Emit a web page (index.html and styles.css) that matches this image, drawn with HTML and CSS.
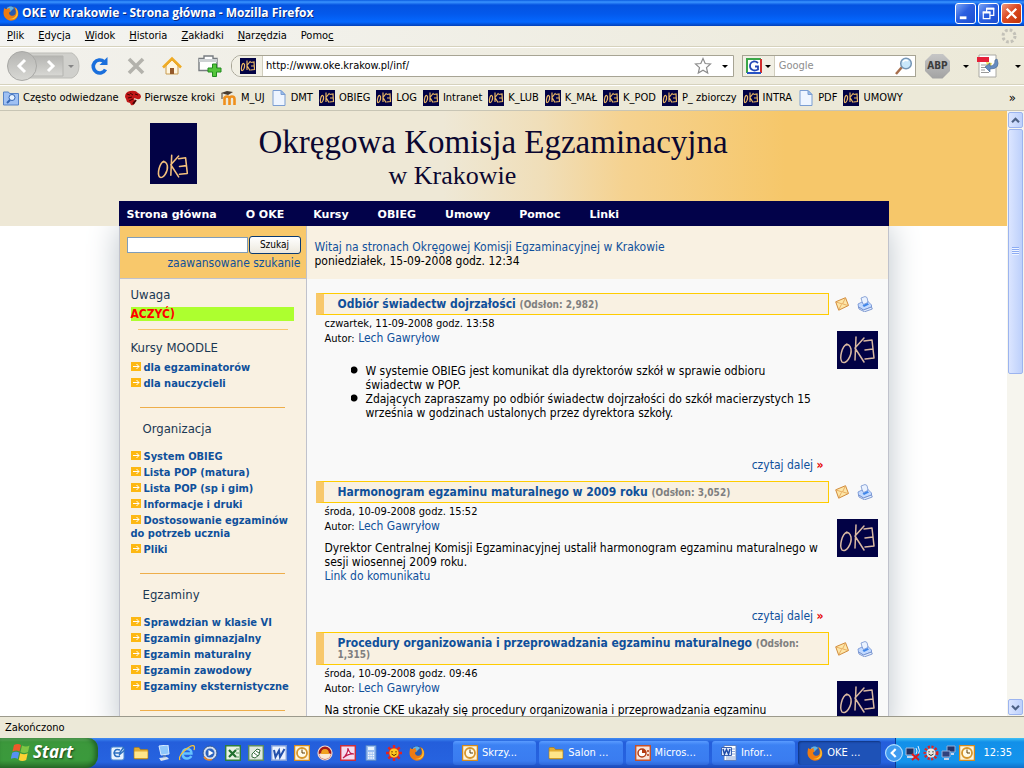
FILE: index.html
```html
<!DOCTYPE html>
<html lang="pl">
<head>
<meta charset="utf-8">
<title>OKE w Krakowie - Strona główna</title>
<link rel="stylesheet" href="styles.css">
</head>
<body>
<svg class="defs" aria-hidden="true">
  <symbol id="oke" viewBox="0 0 41 38">
    <g fill="none" stroke-linecap="round" stroke-linejoin="round">
      <path d="M10 13C5 15 2 27 5 31c4 3 10-6 9-13-1-4-3-5-5-4M19 6l-1 23M27 7l-9 10 9 14M27 10l8-1 2 18-9 1M28 19l8-1"/>
    </g>
  </symbol>
  <symbol id="oke-mini" viewBox="0 0 16 16">
    <path fill="#020245" d="M0 0h16v16H0z"/>
    <path fill="none" stroke="#e9b765" stroke-width="1.2" d="M3 5.500C1.500 7 1 11 1.700 12.500 3.500 13 5 9 4.500 6.500 4 5.500 3.500 5 2.500 6M7 2.500V12M10.500 3L7 7.500 10 12.500M10.500 4.500L14 4l.5 7.500-4 .5M11 8h3.200"/>
  </symbol>
  <symbol id="firefox" viewBox="0 0 16 16">
    <circle cx="8" cy="8" r="7.300" fill="#2a5cae"/>
    <path d="M4 3c2-2 5-2 7 0L9 5 7 7 4 6z" fill="#5fb3e8"/>
    <path d="M1 3c1 1 2 1 3 1 1-1 2-1 3-.5C6 5 7 5 8 6 7 7 6 7 6 8.500c1 3 5 3 6.500.5C13.500 6 12 4 11 2c3 1 4.500 4 4.300 7C15 13 12 15.700 8 15.700S.500 12 .500 8C.500 6 1 5 1 3z" fill="#ee7b12"/>
    <path d="M12.500 2.500c2 2 2.800 5 2 8C13 14 9 15 6 14c5 0 8-3 7.500-7-.1-2-.5-3-1-4.500z" fill="#fbc935"/>
  </symbol>
  <symbol id="page" viewBox="0 0 16 16">
    <path d="M2 .500h8L14 4.500v11H2z" fill="#eef5ff" stroke="#7b9ed2"/><path d="M10 .500v4h4z" fill="#9cc0ef" stroke="#7b9ed2"/>
  </symbol>
  <symbol id="folder" viewBox="0 0 16 16">
    <path d="M1 3.500q0-1 1-1h4l1.500 2H14q1 0 1 1V13q0 1-1 1H2q-1 0-1-1z" fill="#e2ac32" stroke="#a87912" stroke-width=".6"/><path d="M1.500 6.500h13V13h-13z" fill="#ffe58a"/>
  </symbol>
  <symbol id="outlook" viewBox="0 0 16 16">
    <path d="M.500.500h15v15H.500z" fill="#fff4d8" stroke="#d48a1c" stroke-width="1.500"/><circle cx="8" cy="8" r="5" fill="#fffbe9" stroke="#d7962c" stroke-width="1.800"/><path d="M8 4.500V8h3" fill="none" stroke="#5c3b06"/>
  </symbol>
  <symbol id="sun" viewBox="0 0 16 16">
    <path d="M6.800 0h2.400v3H6.800zM6.800 13h2.400v3H6.800zM0 6.800h3v2.400H0zM13 6.800h3v2.400h-3zM1.500 3.200l1.700-1.700 2.300 2.300-1.700 1.700zM12.800 1.500l1.700 1.700-2.300 2.300-1.700-1.700zM1.500 12.800l2.300-2.300 1.700 1.700-2.300 2.300zM14.500 12.800l-1.700 1.700-2.300-2.300 1.700-1.700z" fill="#e32222"/><circle cx="8" cy="8" r="5" fill="#ffc91f" stroke="#e32222" stroke-width=".8"/><path d="M6 6v1.500M10 6v1.500M5.500 9q2.500 3 5 0" fill="none" stroke="#5a2a00"/>
  </symbol>
  <symbol id="word" viewBox="0 0 16 16">
    <path d="M3 .500h12v15H3z" fill="#fff" stroke="#5c7fc0"/><path d="M11 4h3M11 6.500h3M11 9h3M5 12h9M5 14h9" stroke="#8ba4d6"/><path d="M.500 2.500h10v8H.500z" fill="#dfe9fb" stroke="#3a61b1"/><path d="M2 4l1.500 5L5.500 4.500 7.500 9 9 4" fill="none" stroke="#1f4aa8" stroke-width="1.500"/>
  </symbol>
  <symbol id="arrow" viewBox="0 0 10 9">
    <path d="M0 0h10v9H0z" fill="#fdb813"/><path d="M2 4.500h6M5.500 2L8 4.500 5.500 7" fill="none" stroke="#fff"/>
  </symbol>
  <symbol id="mail" viewBox="0 0 14 14">
    <path d="M.700 4.800L10.500.700l3 7.800-9.800 4.700z" fill="#fde6a8" stroke="#d08b3c"/><path d="M1 5l6.500 2L10.400 1M3.800 12.600l2.700-5.300M13 8.500L8 7" fill="none" stroke="#e3a254" stroke-width=".8"/>
  </symbol>
  <symbol id="print" viewBox="0 0 16 16">
    <path d="M4 2l4-1.500 2 1L11.500 8 6 9z" fill="#eaf2ff" stroke="#7593cf" stroke-width=".8"/><path d="M1 8l4-2 1.500 2.500L10 7l1-1.500 3.500 3.500v2L6.500 14 1.500 11z" fill="#c3daff" stroke="#6f8ed0" stroke-width=".8"/><path d="M1.500 11L6.500 14l8-3 .8 2-7.800 2.800L2 13z" fill="#e4efff" stroke="#6484c6" stroke-width=".8"/><path d="M5.500 9.500l5-2.500 1.500 1.500-5 2.500z" fill="#3f86ea"/>
  </symbol>
</svg>

<div class="window">
  <header class="titlebar">
    <svg class="i16"><use href="#firefox"/></svg>
    <span class="titlebar-text">OKE w Krakowie - Strona główna - Mozilla Firefox</span>
    <button class="winbtn" aria-label="Minimalizuj"><svg viewBox="0 0 20 20"><path d="M4 13h7v3H4z" fill="#fff"/></svg></button>
    <button class="winbtn" aria-label="Przywróć"><svg viewBox="0 0 20 20"><path d="M8 8V4.500h7.500V12H12M4.500 8.500h7v7h-7z" fill="none" stroke="#fff" stroke-width="1.300"/><path d="M8 5h8M4 9h8" stroke="#fff" stroke-width="2"/></svg></button>
    <button class="winbtn winbtn-close" aria-label="Zamknij"><svg viewBox="0 0 20 20"><path d="M5 5l10 10M15 5L5 15" stroke="#fff" stroke-width="2.500"/></svg></button>
  </header>

  <nav class="menubar">
    <button><u>P</u>lik</button><button><u>E</u>dycja</button><button><u>W</u>idok</button><button><u>H</u>istoria</button><button><u>Z</u>akładki</button><button><u>N</u>arzędzia</button><button>Pomo<u>c</u></button>
    <svg class="throbber" viewBox="0 0 16 16"><circle cx="8" cy="8" r="6" fill="none" stroke="#c3c1b8" stroke-width="3" stroke-dasharray="2.700 2"/></svg>
  </nav>

  <div class="toolbar">
    <div class="backforward">
      <svg viewBox="0 0 78 30">
        <defs><linearGradient id="gb" x2="0" y2="1"><stop stop-color="#b5b5b2"/><stop offset="1" stop-color="#d8d8d4"/></linearGradient></defs>
        <path d="M14 2h56q7 4 7 13t-7 12H14z" fill="#d0d0cc" stroke="#bdbdb8"/>
        <path d="M30 5h31v20H30z" fill="url(#gb)" stroke="#b4b4b0"/>
        <circle cx="20" cy="15" r="14.500" fill="url(#gb)" stroke="#a9a9a6"/>
        <path d="M23 9l-6 6 6 6" fill="none" stroke="#fff" stroke-width="3"/><path d="M46 10l5 5-5 5" fill="none" stroke="#fff" stroke-width="3"/><path d="M66 14h6l-3 3z" fill="#858585"/>
      </svg>
    </div>
    <button class="tool" aria-label="Odśwież"><svg viewBox="0 0 20 20"><path d="M15.500 13.500A6.500 6.500 0 1 1 14 5.500" fill="none" stroke="#1a6fdc" stroke-width="3.600"/><path d="M17.500 1v8h-8z" fill="#1a6fdc"/></svg></button>
    <button class="tool" aria-label="Zatrzymaj"><svg viewBox="0 0 20 20"><path d="M3 3l14 14M17 3L3 17" stroke="#b3b2ac" stroke-width="3.600"/></svg></button>
    <button class="tool" aria-label="Strona startowa"><svg viewBox="0 0 20 20"><path d="M4 10v8h12v-8l-6-6z" fill="#fff6e0" stroke="#c99b4f"/><path d="M1 11.500L10 2.500l9 9" fill="none" stroke="#efab24" stroke-width="2.600"/><path d="M8 12h4v6H8z" fill="#94592a"/></svg></button>
    <button class="tool tool-wide" aria-label="Nowa karta"><svg viewBox="0 0 24 22"><path d="M1 3.500h5V1h9v2.500h4v12H1z" fill="#fff" stroke="#777c80" stroke-width="1.400"/><path d="M1 4h18v3H1z" fill="#cdd1d3"/><path d="M14.500 9h4v4H23v4h-4.500v4.500h-4V17H10v-4h4.500z" fill="#54c53b" stroke="#218a1f"/></svg></button>
    <div class="urlbar">
      <span class="favicon"><svg class="i16"><use href="#oke-mini"/></svg></span>
      <input type="text" aria-label="Adres" value="http://www.oke.krakow.pl/inf/">
      <svg class="i18" viewBox="0 0 18 18"><path d="M9 1.500l2.200 5 5.300.5-4 3.600 1.200 5.400L9 13.200 4.300 16l1.200-5.400-4-3.600 5.300-.5z" fill="#fff" stroke="#8c8c8c" stroke-width="1.200"/></svg>
      <span class="caret"></span>
    </div>
    <div class="searchbar">
      <span class="engine"><svg class="i16" viewBox="0 0 16 16"><path d="M0 0h16v16H0z" fill="#fff"/><path d="M1 15V1h14" fill="none" stroke="#3aa648" stroke-width="2"/><path d="M15 1v14" stroke="#d02d2d" stroke-width="2"/><path d="M1 15h14" stroke="#2753c4" stroke-width="2"/><path d="M12 5Q10 3 7.500 3.500 4 4.500 4 8t4 4.500q2.500 0 4-1V8.500H9" fill="none" stroke="#2447b5" stroke-width="1.800"/></svg><span class="caret"></span></span>
      <input type="text" aria-label="Szukaj w Google" placeholder="Google">
      <svg class="i18" viewBox="0 0 18 18"><path d="M1 17l6-7" stroke="#a76d4b" stroke-width="2.500"/><circle cx="11" cy="6.500" r="5.300" fill="#c9e7fb" stroke="#7595b5" stroke-width="1.500"/><path d="M8 5q2-3 5-1" stroke="#fff" fill="none" stroke-width="1.500"/></svg>
    </div>
    <button class="abp">ABP</button>
    <span class="caret caret-wide"></span>
    <svg class="pdf" viewBox="0 0 24 24"><path d="M2 1h17v22H2z" fill="#fff" stroke="#aaa9a3"/><path d="M0 3h12v5H0z" fill="#e5213a"/><path d="M4 11h6M4 13.500h6M4 16h4M4 18.500h8" stroke="#999"/><path d="M9 8l6 1-3 8z" fill="#eddf54"/><path d="M20 5q4 10-7 10v3l-5-5 5-4v3q5 0 5-6z" fill="#648bc0" stroke="#43638d" stroke-width=".6"/></svg>
    <span class="caret"></span>
  </div>

  <nav class="bookmarks">
    <a href="#"><svg class="i16" viewBox="0 0 16 16"><path d="M.500 2h5l1 1.500h9V15H.500z" fill="#9fc1f3" stroke="#5583c7"/><circle cx="9" cy="7.500" r="3" fill="#e7f3ff" stroke="#3466b4"/><path d="M4 13l3-3" stroke="#3466b4" stroke-width="2"/></svg>Często odwiedzane</a>
    <a href="#"><svg class="i16" viewBox="0 0 16 16"><path d="M0 7Q0 2 5 1q6-1 8 2 3 1 3 4-1 3-4 2l-3-1 1 4q-1 4-4 3l-1-2-3-1-1-3z" fill="#c01818"/><path d="M2 4l3 1M5 3l3 2M3 8l4-1M4 11l4-2M10 4l3 1" stroke="#450404"/><path d="M8 14l3-4" stroke="#450404" stroke-width="2"/></svg>Pierwsze kroki</a>
    <a href="#"><svg class="i16" viewBox="0 0 16 16"><path d="M3.500 15V7M3.500 9q0-2.500 2.500-2.500T8.500 9v6M8.500 9q0-2.500 2.500-2.500T13.500 9v6" fill="none" stroke="#ef8f1c" stroke-width="2.600"/><path d="M0 3l6-2 6 1-5 3z" fill="#473c32"/><path d="M1 3v6" stroke="#473c32"/></svg>M_UJ</a>
    <a href="#"><svg class="i16"><use href="#page"/></svg>DMT</a>
    <a href="#"><svg class="i16"><use href="#oke-mini"/></svg>OBIEG</a>
    <a href="#"><svg class="i16"><use href="#oke-mini"/></svg>LOG</a>
    <a href="#"><svg class="i16"><use href="#oke-mini"/></svg>Intranet</a>
    <a href="#"><svg class="i16"><use href="#oke-mini"/></svg>K_LUB</a>
    <a href="#"><svg class="i16"><use href="#oke-mini"/></svg>K_MAŁ</a>
    <a href="#"><svg class="i16"><use href="#oke-mini"/></svg>K_POD</a>
    <a href="#"><svg class="i16"><use href="#oke-mini"/></svg>P_ zbiorczy</a>
    <a href="#"><svg class="i16"><use href="#oke-mini"/></svg>INTRA</a>
    <a href="#"><svg class="i16"><use href="#page"/></svg>PDF</a>
    <a href="#"><svg class="i16"><use href="#oke-mini"/></svg>UMOWY</a>
    <span class="more-marks">»</span>
  </nav>

  <div class="viewport">
    <div class="page">
      <div class="banner-bg">
        <div class="banner">
          <div class="banner-top">
            <div class="logo"><svg viewBox="0 0 41 38" stroke="#f3c07c" stroke-width="1.800"><use href="#oke"/></svg></div>
            <h1>Okręgowa Komisja Egzaminacyjna<small>w Krakowie</small></h1>
          </div>
          <nav class="sitenav">
            <a href="#">Strona główna</a><a href="#">O OKE</a><a href="#">Kursy</a><a href="#">OBIEG</a><a href="#">Umowy</a><a href="#">Pomoc</a><a href="#">Linki</a>
          </nav>
        </div>
      </div>

      <div class="site">
        <aside class="sidebar">
          <form class="search">
            <div class="search-row"><input type="text" aria-label="Szukana fraza"><button type="button">Szukaj</button></div>
            <a href="#">zaawansowane szukanie</a>
          </form>
          <div class="side-body">
            <h3>Uwaga</h3>
            <div class="notice">ACZYĆ)</div>
            <hr class="rule-light">
            <h3>Kursy MOODLE</h3>
            <ul class="links">
              <li><a href="#"><svg><use href="#arrow"/></svg>dla egzaminatorów</a></li>
              <li><a href="#"><svg><use href="#arrow"/></svg>dla nauczycieli</a></li>
            </ul>
            <hr>
            <h4>Organizacja</h4>
            <ul class="links">
              <li><a href="#"><svg><use href="#arrow"/></svg>System OBIEG</a></li>
              <li><a href="#"><svg><use href="#arrow"/></svg>Lista POP (matura)</a></li>
              <li><a href="#"><svg><use href="#arrow"/></svg>Lista POP (sp i gim)</a></li>
              <li><a href="#"><svg><use href="#arrow"/></svg>Informacje i druki</a></li>
              <li><a href="#"><svg><use href="#arrow"/></svg>Dostosowanie egzaminów do potrzeb ucznia</a></li>
              <li><a href="#"><svg><use href="#arrow"/></svg>Pliki</a></li>
            </ul>
            <hr>
            <h4>Egzaminy</h4>
            <ul class="links">
              <li><a href="#"><svg><use href="#arrow"/></svg>Sprawdzian w klasie VI</a></li>
              <li><a href="#"><svg><use href="#arrow"/></svg>Egzamin gimnazjalny</a></li>
              <li><a href="#"><svg><use href="#arrow"/></svg>Egzamin maturalny</a></li>
              <li><a href="#"><svg><use href="#arrow"/></svg>Egzamin zawodowy</a></li>
              <li><a href="#"><svg><use href="#arrow"/></svg>Egzaminy eksternistyczne</a></li>
            </ul>
            <hr>
          </div>
        </aside>

        <main class="content">
          <div class="welcome">
            <a href="#">Witaj na stronach Okręgowej Komisji Egzaminacyjnej w Krakowie</a>
            <div>poniedziałek, 15-09-2008 godz. 12:34</div>
          </div>

          <article>
            <h2><a href="#">Odbiór świadectw dojrzałości</a> <small>(Odsłon: 2,982)</small></h2>
            <div class="actions"><svg class="i14"><use href="#mail"/></svg><svg class="i16"><use href="#print"/></svg></div>
            <div class="text">
              <div class="date">czwartek, 11-09-2008 godz. 13:58</div>
              <div><span class="label">Autor:</span> <a href="#">Lech Gawryłow</a></div>
              <div class="lead">
                <ul>
                  <li>W systemie OBIEG jest komunikat dla dyrektorów szkół w sprawie odbioru świadectw w POP.</li>
                  <li>Zdających zapraszamy po odbiór świadectw dojrzałości do szkół macierzystych 15 września w godzinach ustalonych przez dyrektora szkoły.</li>
                </ul>
              </div>
              <div class="more"><a href="#">czytaj dalej</a> <b>»</b></div>
            </div>
            <div class="thumb"><svg viewBox="0 0 41 38" stroke="#d9b9a2" stroke-width="1.500"><use href="#oke"/></svg></div>
          </article>

          <article>
            <h2><a href="#">Harmonogram egzaminu maturalnego w 2009 roku</a> <small>(Odsłon: 3,052)</small></h2>
            <div class="actions"><svg class="i14"><use href="#mail"/></svg><svg class="i16"><use href="#print"/></svg></div>
            <div class="text">
              <div class="date">środa, 10-09-2008 godz. 15:52</div>
              <div><span class="label">Autor:</span> <a href="#">Lech Gawryłow</a></div>
              <div class="lead">Dyrektor Centralnej Komisji Egzaminacyjnej ustalił harmonogram egzaminu maturalnego w sesji wiosennej 2009 roku.<br><a href="#">Link do komunikatu</a></div>
              <div class="more"><a href="#">czytaj dalej</a> <b>»</b></div>
            </div>
            <div class="thumb"><svg viewBox="0 0 41 38" stroke="#d9b9a2" stroke-width="1.500"><use href="#oke"/></svg></div>
          </article>

          <article>
            <h2><a href="#">Procedury organizowania i przeprowadzania egzaminu maturalnego</a> <small>(Odsłon: 1,315)</small></h2>
            <div class="actions"><svg class="i14"><use href="#mail"/></svg><svg class="i16"><use href="#print"/></svg></div>
            <div class="text">
              <div class="date">środa, 10-09-2008 godz. 09:46</div>
              <div><span class="label">Autor:</span> <a href="#">Lech Gawryłow</a></div>
              <div class="lead">Na stronie CKE ukazały się procedury organizowania i przeprowadzania egzaminu</div>
            </div>
            <div class="thumb"><svg viewBox="0 0 41 38" stroke="#d9b9a2" stroke-width="1.500"><use href="#oke"/></svg></div>
          </article>
        </main>
      </div>
    </div>
    <div class="scrollbar">
      <button aria-label="W górę"><svg viewBox="0 0 15 15"><path d="M3.500 9.500l4-4 4 4" fill="none" stroke="#4d6185" stroke-width="2.500"/></svg></button>
      <div class="track"><div class="handle"><i></i></div></div>
      <button aria-label="W dół"><svg viewBox="0 0 15 15"><path d="M3.500 5.500l4 4 4-4" fill="none" stroke="#4d6185" stroke-width="2.500"/></svg></button>
    </div>
  </div>

  <div class="status">Zakończono</div>

  <footer class="taskbar">
    <button class="start"><svg viewBox="0 0 20 20"><path d="M3 3q4-2 7 0L8.500 9.500q-3-2-7 0z" fill="#ee5a2a"/><path d="M11 3.500q4 2 7.500 0L17 10q-4 2-7.500 0z" fill="#7fc744"/><path d="M1.200 10.700q4-2 7 0L6.700 17q-3-2-7 0z" fill="#5691f1"/><path d="M9.200 11.200q4 2 7.500 0L15.200 18q-4 2-7.500 0z" fill="#fcd233"/></svg>Start</button>
    <div class="quick">
      <svg class="i16" viewBox="0 0 16 16"><rect x="1" y="2" width="13" height="13" rx="2" fill="#e8f3ff" stroke="#4a87ce"/><path d="M10 5q-5-2-6 3 1 5 6 3M4.500 8h5L14 2M9 10l6-5" fill="none" stroke="#2b6fc0" stroke-width="1.500"/></svg>
      <svg class="i16"><use href="#folder"/></svg>
      <svg class="i16" viewBox="0 0 16 16"><path d="M3 1l9-1 1 9-8 1z" fill="#8fc7fb" stroke="#d8ebff"/><path d="M7 10h3v3H7z" fill="#5c83bd"/><path d="M3 13l8-1 2 2-8 2z" fill="#d7e2f0"/></svg>
      <svg class="i16" viewBox="0 0 16 16"><path d="M3.500 8.500h9q0-4.500-4.500-4.500T3.500 9q.5 4.500 4.500 4.500 3 0 4.300-2.500" fill="none" stroke="#66c3ff" stroke-width="2.400"/><path d="M1 15Q-1 12 5 6 13-1 15 1q1 1 0 4" fill="none" stroke="#f4c13a" stroke-width="1.300"/></svg>
      <svg class="i16" viewBox="0 0 16 16"><circle cx="8" cy="8" r="7" fill="#d4dff0" stroke="#2f5795"/><circle cx="8" cy="8" r="4.500" fill="#2a62bd"/><path d="M6.500 5v6l5-3z" fill="#fff"/><path d="M2 12q3 4 8 2.500" fill="none" stroke="#ed8927" stroke-width="1.500"/></svg>
      <svg class="i16" viewBox="0 0 16 16"><path d="M.700.700h14.600v14.600H.700z" fill="#e7f3e2" stroke="#2d7c3d" stroke-width="1.400"/><path d="M4 5l7 7M11 5l-7 7" stroke="#21702f" stroke-width="2.200"/><path d="M11 4h3M11 8h3M11 12h3" stroke="#5c9a63"/></svg>
      <svg class="i16" viewBox="0 0 16 16"><path d="M.700.700h14.600v14.600H.700z" fill="#e0eadf" stroke="#5b8a61" stroke-width="1.400"/><path d="M4 9l5-5 3 1-1 5-4 3-3-1zM6 8l4 3M8 6l3 2" fill="#fff" stroke="#386e40"/></svg>
      <svg class="i16" viewBox="0 0 16 16"><path d="M.700.700h14.600v14.600H.700z" fill="#edf3ff" stroke="#7d9bd8" stroke-width="1.400"/><path d="M3 5l1.500 7L8 5.500l1 6.500L13.500 4" fill="none" stroke="#2350ab" stroke-width="2"/></svg>
      <svg class="i16"><use href="#outlook"/></svg>
      <svg class="i16" viewBox="0 0 16 16"><circle cx="8" cy="8" r="7" fill="#a41919" stroke="#f4d9cf" stroke-width="1.200"/><path d="M2 9q6-3 12 0-1 5-6 5T2 9z" fill="#fbe9d5"/><path d="M4 9Q4 4 8 4t4 5z" fill="#f0a121"/></svg>
      <svg class="i16" viewBox="0 0 16 16"><path d="M.700.700h14.600v14.600H.700z" fill="#f6dcef" stroke="#c92d3b" stroke-width="1.400"/><path d="M3 13Q8 9 8 3q1 6 6 6-5-1-11 4z" fill="#fff" stroke="#c21a4a" stroke-width="1.200"/></svg>
      <svg class="i16" viewBox="0 0 16 16"><path d="M3 .500h10v15H3z" fill="#9dc0f2" stroke="#5484c9"/><path d="M5 2h6v3H5z" fill="#eaf6ff"/><path d="M5 8h6M5 10.500h6M5 13h6" stroke="#fff" stroke-width="1.500" stroke-dasharray="1.500 .8"/></svg>
      <svg class="i16"><use href="#sun"/></svg>
      <svg class="i16"><use href="#firefox"/></svg>
    </div>
    <div class="tasks">
      <button><svg class="i16"><use href="#outlook"/></svg>Skrzy...</button>
      <button><svg class="i16"><use href="#folder"/></svg>Salon ...</button>
      <button><svg class="i16" viewBox="0 0 16 16"><path d="M.700.700h14.600v14.600H.700z" fill="#f9e4da" stroke="#c55129" stroke-width="1.400"/><circle cx="7" cy="8" r="4" fill="#fff" stroke="#b23c14" stroke-width="1.500"/><path d="M7 8V4a4 4 0 0 1 4 4z" fill="#b23c14"/><path d="M12 6h2M12 10h2" stroke="#b23c14" stroke-width="1.500"/></svg>Micros...</button>
      <button><svg class="i16"><use href="#word"/></svg>Infor...</button>
      <button class="active"><svg class="i16"><use href="#firefox"/></svg>OKE ...</button>
    </div>
    <div class="tray">
      <button class="expand" aria-label="Pokaż ukryte ikony"><svg viewBox="0 0 16 16"><circle cx="8" cy="8" r="7.500" fill="#3f9bf0" stroke="#b5e0ff"/><path d="M9.500 4.500L6 8l3.500 3.500" fill="none" stroke="#fff" stroke-width="2"/></svg></button>
      <svg class="i16" viewBox="0 0 16 16"><path d="M1 3h8v7H1z" fill="#23305e" stroke="#a9bddd"/><path d="M2 12h7" stroke="#c6d4eb" stroke-width="2"/><path d="M11 3q2 3 0 6M13 1q3 5 0 9" fill="none" stroke="#dfeeff"/><path d="M7 9l7 6M14 9l-7 6" stroke="#e11717" stroke-width="2"/></svg>
      <svg class="i16" viewBox="0 0 16 16"><circle cx="8" cy="8" r="6" fill="none" stroke="#dd2424" stroke-width="3" stroke-dasharray="2 1.500"/><circle cx="8" cy="8" r="4.500" fill="#ebe8e2"/><path d="M6 6v1.500M10 6v1.500M5.500 9q2.500 3 5 0" fill="none" stroke="#333"/></svg>
      <svg class="i16" viewBox="0 0 16 16"><path d="M6 1h8v6H6z" fill="#24346b" stroke="#93aed8"/><path d="M1 6h8v6H1z" fill="#31427c" stroke="#93aed8"/><path d="M3 14h5M10 9h3" stroke="#c1d2ec" stroke-width="2"/></svg>
      <svg class="i16"><use href="#outlook"/></svg>
      <span class="clock">12:35</span>
    </div>
  </footer>
</div>
</body>
</html>
```
FILE: styles.css
```css
* { box-sizing: border-box; }
html, body { height: 100%; }
body {
  margin: 0;
  font: 11px/14px "DejaVu Sans Condensed", Tahoma, sans-serif;
  color: #000;
  overflow: hidden;
}
button, input { font: inherit; color: inherit; margin: 0; padding: 0; border: 0; background: none; }
svg { display: block; flex: none; }
a { color: #0f509b; text-decoration: none; }
h1, h2, h3, h4, ul { margin: 0; padding: 0; font-weight: normal; }
.defs { position: absolute; width: 0; height: 0; }
.i14 { width: 14px; height: 14px; }
.i16 { width: 16px; height: 16px; }
.i18 { width: 18px; height: 18px; }
.window { display: flex; flex-direction: column; height: 100vh; background: #ece9d8; }

/* Window frame */
.titlebar {
  display: flex; align-items: center; gap: 2px;
  height: 26px; padding: 0 2px 0 3px;
  background: linear-gradient(#0a5be0, #3a94ff 2px, #0453e0 5px, #0359ec 14px, #0468ff 22px, #0340b8);
}
.titlebar-text {
  flex: 1; padding-left: 1px;
  font: bold 12px/16px "Open Sans", "Trebuchet MS", sans-serif;
  color: #fff; text-shadow: 1px 1px #0a2a80; white-space: nowrap;
}
.winbtn {
  width: 21px; height: 21px;
  border: 1px solid #fff; border-radius: 3px;
  background: linear-gradient(135deg, #7ba5f5, #2b5fe0 45%, #1c4ed0);
}
.winbtn-close { background: linear-gradient(135deg, #f09a80, #dc4a24 45%, #c03408); }

.menubar {
  display: flex; align-items: center; gap: 14px;
  height: 21px; padding: 0 7px;
  background: linear-gradient(90deg, #f4f4f2, #ece9d8);
  border-bottom: 1px solid #d6d2bd;
}
.throbber { width: 16px; height: 16px; margin-left: auto; }

.toolbar {
  display: flex; align-items: center;
  height: 38px; padding: 0 3px 0 2px;
  border-top: 1px solid #fff;
  background: linear-gradient(90deg, #f2f1ec, #ece9d8);
  border-bottom: 1px solid #d6d2bd;
}
.backforward { width: 78px; margin-right: 10px; }
.tool { width: 20px; height: 20px; margin-right: 16px; }
.tool-wide { width: 24px; height: 22px; margin-right: 9px; }
.urlbar, .searchbar {
  display: flex; align-items: center; min-width: 0;
  height: 22px; background: #fff; border: 1px solid #a7a494;
}
.urlbar { flex: 504 1 0; border-radius: 10px 0 0 10px; overflow: hidden; padding-right: 5px; }
.urlbar input, .searchbar input { flex: 1; min-width: 0; }
.urlbar input { padding-left: 3px; }
.favicon { padding: 2px 6px 2px 8px; background: #f1efe4; border-right: 1px solid #d0cdbd; }
.caret { flex: none; margin-left: 10px; border: 3px solid transparent; border-top-color: #000; border-bottom: 0; width: 5px; }
.caret-wide { margin: 0 8px 0 13px; }
.searchbar { flex: 173 1 0; margin-left: 8px; padding-right: 2px; }
.engine { display: flex; align-items: center; height: 20px; padding: 0 3px 0 3px; background: #f1efe4; border-right: 1px solid #d0cdbd; }
.engine .caret { margin-left: 3px; }
.searchbar input { padding-left: 4px; }
.searchbar input::placeholder { color: #8d8d8d; opacity: 1; }
.abp {
  width: 25px; height: 25px; margin-left: 9px;
  background: linear-gradient(#c6c6c6, #a2a2a2);
  color: #3c3c3c; font-weight: bold; font-size: 10px;
  clip-path: polygon(30% 0, 70% 0, 100% 30%, 100% 70%, 70% 100%, 30% 100%, 0 70%, 0 30%);
}
.pdf { width: 24px; height: 24px; }
.pdf + .caret { margin-left: 14px; }

.bookmarks {
  display: flex; align-items: center; gap: 6px;
  height: 26px; padding: 0 8px 0 3px;
  border-top: 1px solid #fff;
  border-bottom: 1px solid #c8c5b5;
  background: #ece9d8; white-space: nowrap;
}
.bookmarks a { display: flex; align-items: center; gap: 4px; color: #000; }
.more-marks { margin-left: auto; font-size: 13px; }

/* Web page */
.viewport { display: flex; flex: 1; min-height: 0; background: #fff; }
.page { flex: 1; min-width: 0; overflow: hidden; }
.banner-bg { position: relative; z-index: 1; background: linear-gradient(90deg, #eee8d6 44%, #f0deb8 54%, #f5d290 62%, #f6c76a 78%); }
.banner { max-width: 770px; margin: 0 auto; }
.banner-top { display: flex; align-items: flex-start; height: 90px; padding: 12px 0 0 31px; }
.logo {
  display: flex; align-items: flex-end; justify-content: center;
  width: 47px; height: 61px; padding-bottom: 1px; background: #020245;
}
.logo svg { width: 40px; height: 33px; }
h1 {
  margin-left: 62px; color: #0b0730;
  font: 33px/38px "Liberation Serif", serif;
}
h1 small { display: block; margin-left: 130px; font-size: 26px; line-height: 30px; }
.sitenav {
  display: flex; align-items: center; gap: 29px;
  height: 25px; padding: 2px 8px 0;
  background: #02024a;
  font: bold 11px/14px "DejaVu Sans", Verdana, sans-serif;
}
.sitenav a { color: #fff; }

.site {
  display: flex; max-width: 770px; margin: 0 auto;
  border: solid #c0c2cc; border-width: 0 1px;
  background: #f9f9f9; box-shadow: 0 0 30px #bcc4ca;
}
.sidebar { flex: 0 0 187px; min-width: 0; background: #f9f1e2; border-right: 1px solid #c0c2cc; }
.search { height: 53px; padding: 10px 5px 0 7px; background: #f8c86b; border-bottom: 1px solid #c0c2cc; text-align: right; font-size: 12px; }
.search-row { display: flex; align-items: center; gap: 1px; }
.search-row input { flex: 1; min-width: 0; height: 16px; border: 1px solid #7f9db9; background: #fff; }
.search-row button {
  width: 52px; height: 18px; border: 1px solid #0a3a72; border-radius: 3px;
  background: linear-gradient(#fff, #ece8dd); font-size: 10px; line-height: 14px;
}
.search a { display: block; margin-top: 2px; }
.side-body { padding: 9px 11px; }
h3, h4 { color: #1b3853; font: 13px/14px "DejaVu Sans Condensed", Tahoma, sans-serif; }
h4 { margin: 14px 0 13px 12px; }
.notice { margin: 5px 1px 8px 0; background: #adff2f; color: #f00; font-weight: bold; font-size: 12px; }
hr { margin: 15px 10px 14px 9px; border: 0; height: 1px; background: #eeae4a; }
.rule-light { margin: 0 7px 11px; background: #f8c86b; }
.links { margin: 5px 0 0; list-style: none; font-weight: bold; line-height: 13px; }
h4 + .links { margin: 0; }
.links li { padding: 1px 0 2px; }
.links svg { display: inline-block; width: 10px; height: 9px; margin-right: 3px; }

.content { flex: 1; min-width: 0; }
.welcome { height: 53px; padding: 14px 8px; background: #f9f1e2; font-size: 12px; }
article {
  display: grid; grid-template-columns: minmax(0, 1fr) 49px; column-gap: 6px;
  margin: 9px 4px 0 9px; font-size: 12px;
}
.welcome + article { margin-top: 14px; }
h2 {
  border: 1px solid #fc0; border-left: 8px solid #f8c86b; background: #f9f1e2;
  padding: 5px 14px 4px; font: bold 12px/11px "DejaVu Sans Condensed", Tahoma, sans-serif;
}
h2 small { font: bold 10px/11px "DejaVu Sans Condensed", Verdana, sans-serif; color: #7f7f7f; }
.actions { display: flex; align-items: center; gap: 8px; }
.text { padding: 2px 5px 0 9px; }
.date { font-size: 11px; }
.label { font-size: 11px; line-height: 12px; }
.lead { margin-top: 8px; padding-right: 4px; }
.lead ul { padding: 11px 0 12px 26px; list-style: none; }
.lead li { padding-left: 15px; background: radial-gradient(circle at 3px 6px, #000 3px, transparent 4px) no-repeat; }
.more { margin-top: 26px; text-align: right; }
.more b { color: #e60000; }
.thumb { width: 41px; height: 38px; margin: 16px 0 0 2px; background: #020245; }

/* Scroll bar */
.scrollbar { display: flex; flex-direction: column; width: 17px; padding: 1px; background: #f6f5ee; }
.scrollbar button, .handle { border: 1px solid #9cb4ef; border-radius: 2px; background: linear-gradient(90deg, #dbe5ff, #bdd0fb); }
.scrollbar button { flex: none; height: 16px; }
.track { flex: 1; padding: 1px 0; }
.handle { display: flex; align-items: center; justify-content: center; height: 43%; }
.handle i { width: 7px; height: 8px; background: repeating-linear-gradient(#8cabf3 0 1px, #eef4ff 1px 2px); }

/* Status bar and task bar */
.status { height: 22px; padding: 4px 5px; border-top: 1px solid #9c9a8c; background: #ece9d8; }
.taskbar {
  display: flex; height: 30px; color: #fff;
  background: linear-gradient(#3f8cf3, #245edb 4px, #2663e0 24px, #1c49b5);
}
.start {
  display: flex; align-items: center; gap: 2px;
  width: 98px; padding: 0 0 3px 11px;
  border-radius: 0 10px 12px 0;
  background: linear-gradient(#6cbc6c, #3c983c 4px, #3b9a3c 22px, #2b722b);
  box-shadow: inset -3px 0 5px #1f5f22;
  font: italic bold 17px/20px "Open Sans", "Trebuchet MS", sans-serif;
  text-shadow: 1px 1px 2px #173f17;
}
.start svg { width: 20px; height: 20px; }
.quick { display: flex; align-items: center; gap: 7px; padding: 0 28px 0 12px; }
.tasks { display: flex; flex: 1; align-items: center; gap: 3px; margin-right: 14px; }
.tasks button {
  display: flex; flex: 1 1 0; align-items: center; gap: 4px;
  height: 24px; padding: 0 9px; border-radius: 3px; white-space: nowrap;
  background: linear-gradient(#5a9bff, #3c81f3 4px, #3a7cf0 20px, #2f68d8);
}
.tasks .active { background: #1e52b7; box-shadow: inset 1px 1px 2px #103480; }
.tray {
  display: flex; align-items: center; gap: 2px; padding-right: 12px;
  background: linear-gradient(#3fc0f5, #1290e9 4px, #1494ec 24px, #1070c8);
  border-left: 1px solid #0d3a93;
}
.expand { width: 18px; height: 18px; margin-left: -11px; }
.clock { margin-left: 6px; }
```
